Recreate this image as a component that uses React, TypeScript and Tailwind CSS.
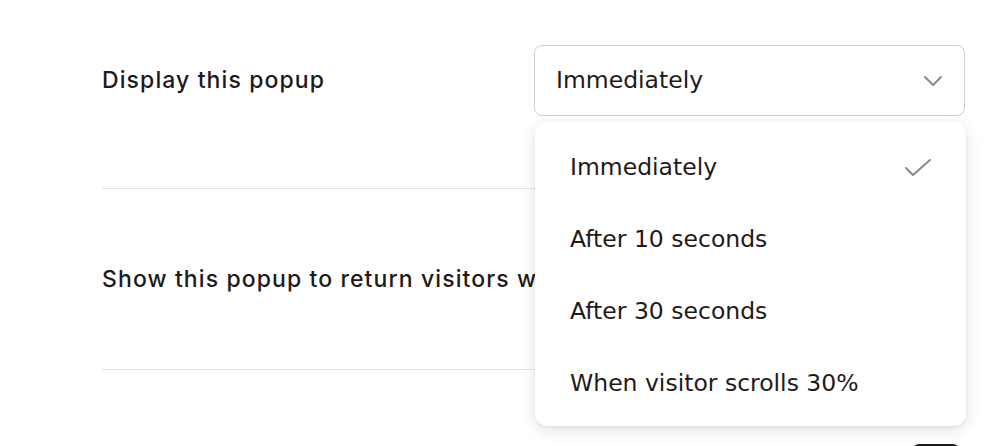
import React from "react";

const options = [
  "Immediately",
  "After 10 seconds",
  "After 30 seconds",
  "When visitor scrolls 30%",
];

const App: React.FC = () => {
  const selected = "Immediately";

  return (
    <div className="h-[446px] w-[1004px] overflow-hidden bg-white font-['Inter',sans-serif] text-[#1f1a17]">
      <div className="relative ml-[102px] w-[863px]">
        {/* Row: display timing */}
        <div className="flex h-[189px] items-start justify-between border-b border-[#e3e3e3] pt-[45px]">
          <div className="flex h-[70px] items-center text-[23px] font-medium tracking-[1.1px]">
            Display this popup
          </div>
          <div className="flex h-[71px] w-[431px] items-center justify-between rounded-[8px] border border-[#cfcfcf] pl-[21px] pr-[21px]">
            <span className="font-['DejaVu_Sans',sans-serif] text-[23.5px]">{selected}</span>
            <svg width="20" height="12" viewBox="0 0 20 12" fill="none">
              <path
                d="M2 2l8 8 8-8"
                stroke="#8f8888"
                strokeWidth="2"
                strokeLinecap="round"
                strokeLinejoin="round"
              />
            </svg>
          </div>
        </div>

        {/* Row: return visitors */}
        <div className="flex h-[181px] items-center justify-between border-b border-[#e3e3e3]">
          <div className="text-[23px] font-medium tracking-[1.1px] whitespace-nowrap">
            Show this popup to return visitors who closed it
          </div>
        </div>

        {/* Next row, mostly cut off */}
        <div className="flex h-[80px] items-end justify-end pr-[6px]">
          <div className="h-[6px] w-[46px] rounded-t-full bg-[#1f1a17]" />
        </div>

        {/* Dropdown menu */}
        <div className="absolute left-[433px] top-[122px] w-[431px] rounded-[12px] bg-white pt-[10px] pb-[6px] font-['DejaVu_Sans',sans-serif] shadow-[0_4px_16px_rgba(0,0,0,0.12),0_1px_3px_rgba(0,0,0,0.06)]">
          {options.map((opt) => (
            <div
              key={opt}
              className="flex h-[72px] items-center justify-between pl-[35px] pr-[34px] text-[23.5px]"
            >
              <span>{opt}</span>
              {opt === selected && (
                <svg width="28" height="20" viewBox="0 0 28 20" fill="none">
                  <path
                    d="M2 10l7 7L26 2"
                    stroke="#8f8888"
                    strokeWidth="2"
                    strokeLinecap="round"
                    strokeLinejoin="round"
                  />
                </svg>
              )}
            </div>
          ))}
        </div>
      </div>
    </div>
  );
};

export default App;
